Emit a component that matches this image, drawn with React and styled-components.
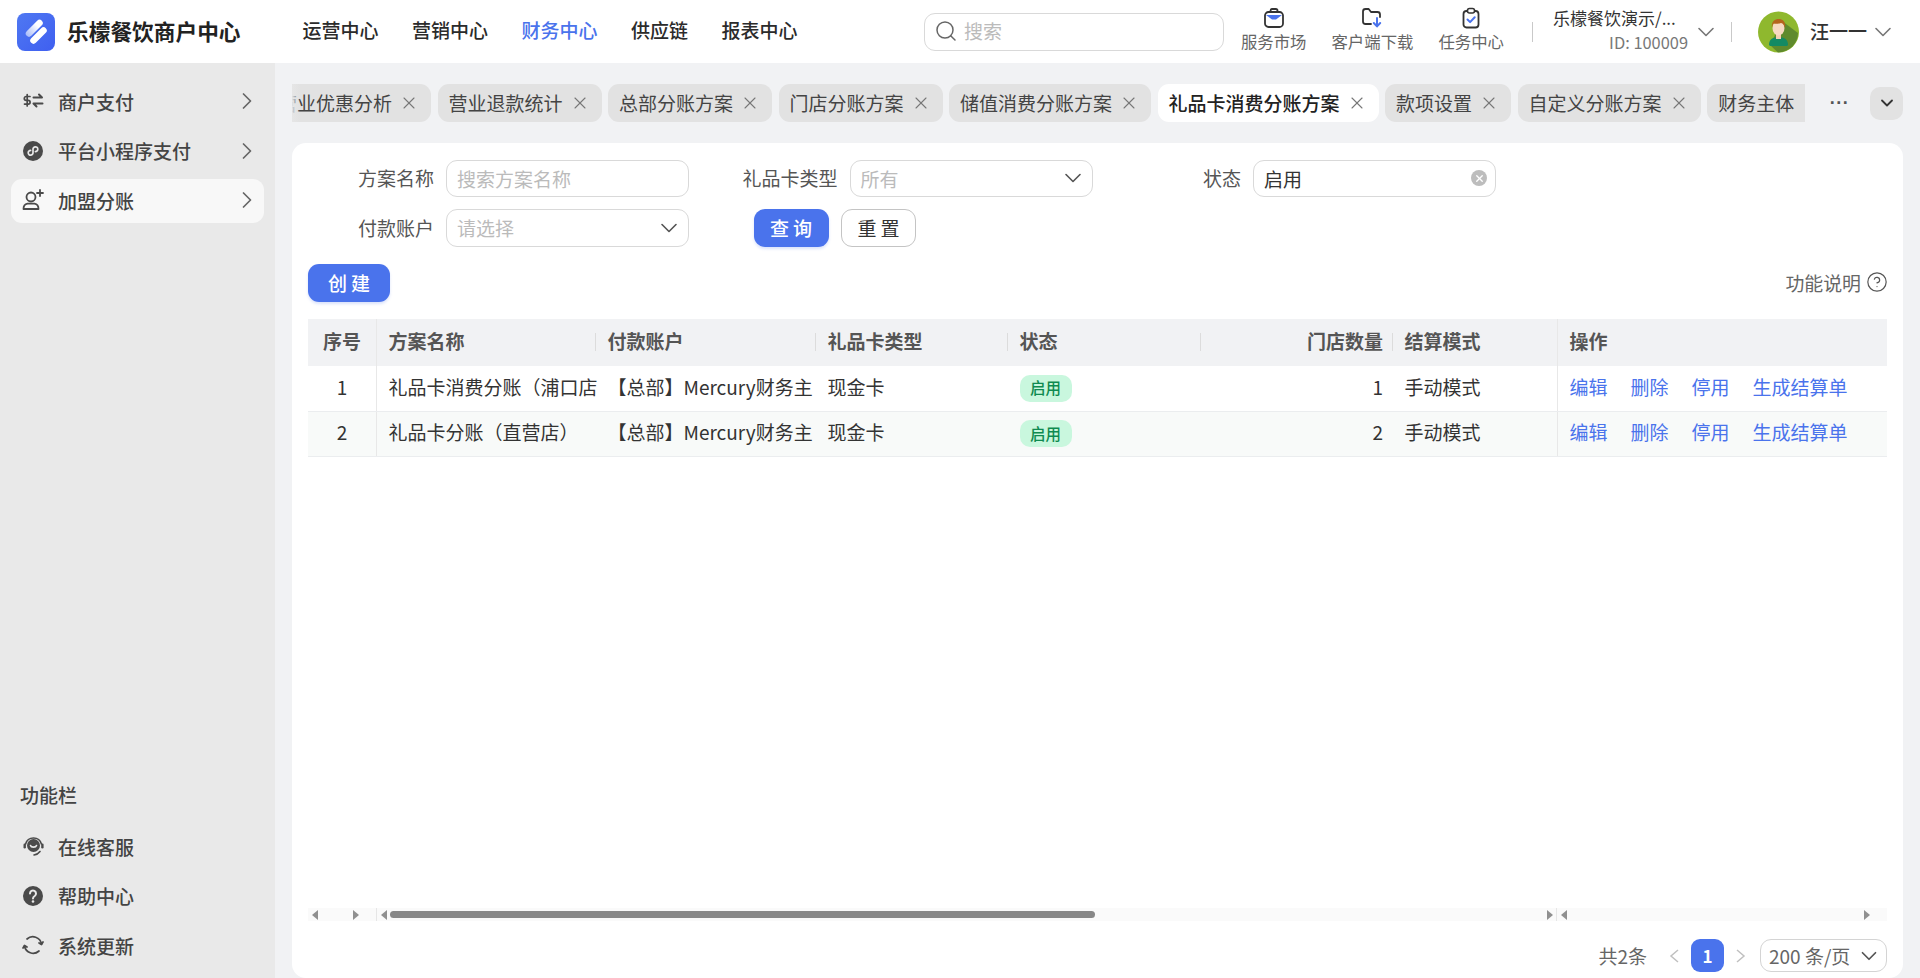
import React from 'react'
import styled, { createGlobalStyle } from 'styled-components'
import { Search, ChevronRight, ChevronDown, X, CircleHelp } from 'lucide-react'

const BLUE = '#4a73ec'

const GlobalStyle = createGlobalStyle`
  * { box-sizing: border-box; }
  html, body { margin: 0; height: 100%; overflow: hidden; }
  body {
    font-family: "Noto Sans CJK SC", "Noto Sans", sans-serif;
    font-size: 19px;
    color: #333;
    background: #f1f2f4;
  }
`

const Page = styled.div`
  width: 1920px;
  height: 978px;
  display: flex;
  flex-direction: column;
`
const Topbar = styled.header`
  height: 63px;
  flex: none;
  background: #fff;
  display: flex;
  align-items: center;
  padding: 0 30px 0 17px;
`
const Brand = styled.div`
  display: flex;
  align-items: center;
  gap: 12px;
  font-size: 21.7px;
  font-weight: 700;
  color: #222;
`
const BrandName = styled.span`
  padding-bottom: 3px;
`
const Nav = styled.nav`
  display: flex;
  gap: 33.5px;
  margin-left: 62px;
  padding-bottom: 4px;
`
const NavItem = styled.span`
  font-size: 19px;
  font-weight: 500;
  color: ${p => (p.$active ? BLUE : '#2b2b2b')};
`
const SearchBox = styled.div`
  width: 300px;
  height: 38px;
  margin-left: auto;
  display: flex;
  align-items: center;
  gap: 6px;
  padding: 0 0 2px 9px;
  border: 1px solid #d9d9d9;
  border-radius: 11px;
  color: #bbb;
  svg { color: #666; }
`
const Tools = styled.div`
  display: flex;
  gap: 25px;
  margin-left: 17px;
  padding-bottom: 5px;
`
const Tool = styled.div`
  display: flex;
  flex-direction: column;
  align-items: center;
  font-size: 16.4px;
  line-height: 22px;
  color: #666;
  svg { margin-bottom: 1px; }
`
const VLine = styled.span`
  width: 1px;
  height: 20px;
  background: #c9c9c9;
  margin: ${p => p.$margin};
`
const Company = styled.div`
  width: 135px;
  display: flex;
  flex-direction: column;
  align-items: flex-end;
  padding-bottom: 3px;
`
const CompanyName = styled.span`
  align-self: flex-start;
  font-size: 17px;
  line-height: 25px;
  color: #333;
  white-space: nowrap;
`
const CompanyId = styled.span`
  font-size: 16.4px;
  line-height: 25px;
  color: #777;
`
const CaretIcon = styled(ChevronDown)`
  color: #777;
  flex: none;
  margin: 0 -7px 0 ${p => p.$gap - 7}px;
`
const UserName = styled.span`
  margin-left: 11px;
  padding-bottom: 3px;
  font-size: 19px;
  font-weight: 500;
  color: #333;
  white-space: nowrap;
`

const Body = styled.div`
  flex: 1;
  min-height: 0;
  display: flex;
`
const Sidebar = styled.aside`
  width: 275px;
  flex: none;
  background: #e9e9e9;
  display: flex;
  flex-direction: column;
  justify-content: space-between;
  padding: 17px 11px 10px;
`
const MenuList = styled.div`
  display: flex;
  flex-direction: column;
  gap: 5.5px;
`
const MenuItem = styled.div`
  height: 44px;
  display: flex;
  align-items: center;
  padding: 0 3px 2px 11px;
  border-radius: 11px;
  background: ${p => (p.$active ? '#f8f8f8' : 'transparent')};
  font-weight: 500;
  color: #444;
  svg.lead { flex: none; margin-right: 14px; color: #4a4a4a; }
  svg.more { flex: none; margin-left: auto; color: #666; }
`
const SectionTitle = styled.div`
  font-weight: 500;
  color: #444;
  line-height: 26px;
  padding-left: 9px;
  margin-bottom: 17px;
  margin-top: -1px;
`

const Workspace = styled.main`
  flex: 1;
  min-width: 0;
  display: flex;
  flex-direction: column;
  padding: 21px 17px 0;
`
const TabRow = styled.div`
  height: 38px;
  flex: none;
  display: flex;
  align-items: center;
`
const TabStrip = styled.div`
  position: relative;
  width: 1514px;
  height: 38px;
  overflow: hidden;
  &::before {
    content: '';
    position: absolute;
    left: 0;
    top: 0;
    bottom: 0;
    width: 8px;
    background: linear-gradient(90deg, #e6e6e6, rgba(230, 230, 230, 0));
  }
`
const TabTrack = styled.div`
  display: flex;
  gap: 6.5px;
  margin-left: -25px;
  width: max-content;
`
const Tab = styled.div`
  height: 38px;
  display: flex;
  align-items: center;
  padding: 0 12px 1px 11px;
  border-radius: 11px;
  white-space: nowrap;
  background: ${p => (p.$active ? '#fff' : '#e2e2e2')};
  color: ${p => (p.$active ? '#222' : '#444')};
  font-weight: ${p => (p.$active ? 500 : 400)};
  svg { margin-left: 7px; color: #777; }
`
const TabMore = styled.span`
  width: 65px;
  padding-left: 4px;
  text-align: center;
  color: #555;
  font-family: "Liberation Sans", sans-serif;
  font-size: 18px;
  font-weight: 700;
  line-height: 30px;
  letter-spacing: 0.5px;
`
const TabToggle = styled.div`
  width: 33px;
  height: 33px;
  border-radius: 10px;
  background: #e2e2e2;
  display: flex;
  align-items: center;
  justify-content: center;
  color: #333;
`

const Card = styled.section`
  flex: 1;
  min-height: 0;
  margin-top: 21px;
  background: #fff;
  border-radius: 14px;
  display: flex;
  flex-direction: column;
  padding: 17px 16px 6px;
`
const FilterGrid = styled.div`
  display: grid;
  grid-template-columns: repeat(3, 381px);
  column-gap: 22.5px;
  row-gap: 12px;
`
const Field = styled.div`
  display: grid;
  grid-template-columns: 1fr 243px;
  column-gap: 12px;
  align-items: center;
`
const FieldLabel = styled.label`
  text-align: right;
  color: #555;
  padding-bottom: 2px;
`
const InputBox = styled.div`
  height: ${p => (p.$tall ? 38 : 37)}px;
  display: flex;
  align-items: center;
  justify-content: space-between;
  padding: 0 8px 1px 10px;
  border: 1px solid #d9d9d9;
  border-radius: 11px;
  color: ${p => (p.$filled ? '#333' : '#bbb')};
  svg.caret { flex: none; margin-right: -3px; color: #555; }
`
const ClearDot = styled.span`
  width: 16px;
  height: 16px;
  border-radius: 50%;
  background: #bdbdbd;
  color: #fff;
  display: flex;
  align-items: center;
  justify-content: center;
`
const ButtonGroup = styled.div`
  display: flex;
  gap: 12.5px;
  padding-left: 42px;
`
const Button = styled.button`
  height: 38px;
  width: ${p => p.$width}px;
  border-radius: 11px;
  font: inherit;
  font-weight: ${p => (p.$primary ? 500 : 400)};
  letter-spacing: 4px;
  padding: 0 0 2px 4px;
  border: ${p => (p.$primary ? 'none' : '1px solid #c4c4c4')};
  background: ${p => (p.$primary ? BLUE : '#fff')};
  color: ${p => (p.$primary ? '#fff' : '#333')};
  box-shadow: ${p => (p.$primary ? '0 2px 3px rgba(74, 115, 236, 0.2)' : 'none')};
`
const Toolbar = styled.div`
  margin-top: 17px;
  display: flex;
  align-items: center;
  justify-content: space-between;
`
const HelpLink = styled.span`
  display: flex;
  align-items: center;
  gap: 5px;
  color: #666;
  font-size: 18.9px;
  padding-bottom: 2px;
  margin-right: -1px;
  svg { color: #555; }
`
const TableWrap = styled.div`
  flex: 1;
  min-height: 0;
  margin-top: 17px;
`
const COLUMNS = '69px 219px 220px 192px 193px 192px 164px 330px'
const HeadRow = styled.div`
  display: grid;
  grid-template-columns: ${COLUMNS};
  height: 47px;
  background: #f1f2f4;
  font-weight: 700;
  color: #555;
`
const Row = styled.div`
  display: grid;
  grid-template-columns: ${COLUMNS};
  height: 45.5px;
  border-bottom: 1.5px solid #ebedef;
  background: ${p => (p.$striped ? '#f8faf9' : '#fff')};
`
const Cell = styled.div`
  position: relative;
  display: flex;
  align-items: center;
  min-width: 0;
  white-space: nowrap;
  padding-left: ${p => (p.$align ? 0 : 11.5)}px;
  padding-right: ${p => (p.$align === 'right' ? 10 : 0)}px;
  padding-bottom: ${p => (p.$flush ? 0 : 4)}px;
  justify-content: ${p => (p.$align === 'right' ? 'flex-end' : p.$align === 'center' ? 'center' : 'flex-start')};
  ${p => p.$align === 'center' && 'border-right: 1px solid #e8e8e8;'}
  ${p => p.$fixed && 'border-left: 1px solid #e8e8e8;'}
`
const HeadCell = styled(Cell)`
  &::after {
    content: ${p => (p.$divider ? "''" : 'none')};
    position: absolute;
    right: 0;
    top: 14px;
    height: 18px;
    width: 1.5px;
    background: #dcdcdc;
  }
`
const Badge = styled.span`
  width: 52px;
  height: 27px;
  padding-bottom: 2px;
  border-radius: 10px;
  background: #c9f7de;
  color: #0f8a50;
  font-size: 15.5px;
  font-weight: 500;
  display: flex;
  align-items: center;
  justify-content: center;
`
const ActionGroup = styled.div`
  display: flex;
  gap: 23px;
  color: ${BLUE};
`
const ScrollStrip = styled.div`
  height: 13px;
  flex: none;
  display: grid;
  grid-template-columns: 69px 1180px 330px;
  background: #fafafa;
`
const ScrollPart = styled.div`
  display: flex;
  align-items: center;
  padding: 0 ${p => (p.$tail ? 17 : 3)}px 0 4px;
  border-right: ${p => (p.$divider ? '1px solid #e6e6e6' : 'none')};
`
const ScrollArrow = styled.span`
  flex: none;
  width: 0;
  height: 0;
  border-top: 5px solid transparent;
  border-bottom: 5px solid transparent;
  ${p => (p.$dir === 'left' ? 'border-right: 6px solid #909090;' : 'border-left: 6px solid #909090; margin-left: auto;')}
`
const ScrollThumb = styled.span`
  width: 705px;
  height: 7px;
  margin-left: 3px;
  border-radius: 4px;
  background: #888;
`
const Pager = styled.footer`
  flex: none;
  margin-top: 18px;
  display: flex;
  align-items: center;
  justify-content: flex-end;
  height: 33px;
`
const PagerTotal = styled.span`
  color: #666;
  margin-right: 22px;
`
const PagerArrow = styled.svg`
  width: 10px;
  height: 14px;
  flex: none;
  fill: none;
  stroke: #c0c0c0;
  stroke-width: 1.5;
`
const PageNumber = styled.span`
  width: 33px;
  height: 33px;
  margin: 0 12px;
  border-radius: 9px;
  background: ${BLUE};
  color: #fff;
  font-size: 17px;
  font-weight: 700;
  display: flex;
  align-items: center;
  justify-content: center;
`
const PageSize = styled.div`
  width: 127px;
  height: 33px;
  margin-left: 14px;
  border: 1px solid #d4d4d4;
  border-radius: 11px;
  display: flex;
  align-items: center;
  justify-content: space-between;
  padding: 0 4px 0 8px;
  color: #666;
  white-space: nowrap;
  svg { flex: none; color: #555; }
`

const Logo = () => (
  <svg width="38" height="38" viewBox="0 0 38 38" fill="none">
    <defs>
      <linearGradient id="logoBg" x1="0" y1="0" x2="1" y2="1">
        <stop offset="0" stopColor="#4f78f2" />
        <stop offset="1" stopColor="#3f5ff0" />
      </linearGradient>
      <linearGradient id="band" gradientUnits="userSpaceOnUse" x1="9" y1="22" x2="20" y2="12">
        <stop offset="0" stopColor="#a9bcf9" />
        <stop offset="1" stopColor="#ffffff" />
      </linearGradient>
    </defs>
    <rect width="38" height="38" rx="8" fill="url(#logoBg)" />
    <path d="M22.500 10L12 20.500" stroke="url(#band)" strokeWidth="6.500" strokeLinecap="round" />
    <path d="M26.500 17.500L16.500 27.500" stroke="#fff" strokeWidth="6.500" strokeLinecap="round" />
  </svg>
)
const BagIcon = () => (
  <svg width="22" height="22" viewBox="0 0 22 22" fill="none">
    <path d="M7.500 5V3.800C7.500 2.800 8.200 2 9.200 2h3.600c1 0 1.700.8 1.700 1.800V5" stroke="#333" strokeWidth="1.800" />
    <rect x="2" y="5" width="18" height="15" rx="3.500" stroke="#333" strokeWidth="1.800" />
    <path d="M3 8h16l-6 4.500h-4z" fill={BLUE} />
  </svg>
)
const FolderIcon = () => (
  <svg width="22" height="22" viewBox="0 0 22 22" fill="none">
    <path d="M10 17H4.500A2.500 2.500 0 0 1 2 14.500v-10A2.500 2.500 0 0 1 4.500 2h3.200l2.300 3h6.500A2.500 2.500 0 0 1 19 7.500V10" stroke="#333" strokeWidth="1.800" strokeLinecap="round" strokeLinejoin="round" />
    <path d="M16 11v8M12.800 16l3.200 3.400 3.200-3.400" stroke={BLUE} strokeWidth="2" strokeLinecap="round" strokeLinejoin="round" />
  </svg>
)
const ClipIcon = () => (
  <svg width="22" height="22" viewBox="0 0 22 22" fill="none">
    <rect x="3.500" y="4" width="15" height="16.500" rx="3" stroke="#333" strokeWidth="1.800" />
    <rect x="7.500" y="1.500" width="7" height="4.500" rx="2" fill="#fff" stroke="#333" strokeWidth="1.600" />
    <path d="M7.500 12.500l2.600 2.600 4.600-4.800" stroke={BLUE} strokeWidth="2" strokeLinecap="round" strokeLinejoin="round" />
  </svg>
)
const Avatar = () => (
  <svg width="41" height="42" viewBox="0 0 41 42">
    <circle cx="20.500" cy="21" r="20.500" fill="#8fb82e" />
    <path d="M24 10 L40 22 C40 33 31 41 20 41.500 L12 34 Z" fill="#5f8a2d" />
    <path d="M11 34c0-5 3-7 6-7.500h7c3 .5 6 2.500 6 7.500l-1 1H12z" fill="#138a63" />
    <rect x="18" y="22" width="5" height="6" fill="#f3cfb3" />
    <ellipse cx="20.500" cy="17" rx="6" ry="7.500" fill="#f7d9c2" />
    <path d="M14 17c-1-6 2.500-9 6.500-9 5 0 7.500 3.500 6.500 9-1-3-2-4.500-4-5-3 1-6 1-7.500.5-.8 1-1.200 2.500-1.500 4.500z" fill="#b5651d" />
  </svg>
)
const TransferIcon = () => (
  <svg className="lead" width="22" height="22" viewBox="0 0 22 22" fill="none" stroke="currentColor" strokeWidth="2" strokeLinecap="round" strokeLinejoin="round">
    <path d="M8 6.500H4.200a1.700 1.700 0 0 0 0 3.800h2a1.700 1.700 0 0 1 0 3.800H2.500M5.200 4.500v11.500" strokeWidth="1.700" />
    <path d="M11.500 7.500h8.500l-3-3M20.500 13.500h-9l3 3" />
  </svg>
)
const MiniAppIcon = () => (
  <svg className="lead" width="22" height="22" viewBox="0 0 22 22">
    <circle cx="11" cy="11" r="10" fill="currentColor" />
    <path d="M8.600 10.400a2.400 2.400 0 1 0 2.400 2.300V9.300a2.400 2.400 0 1 1 2.400 2.300" fill="none" stroke="#e9e9e9" strokeWidth="1.700" strokeLinecap="round" />
  </svg>
)
const UserAddIcon = () => (
  <svg className="lead" width="22" height="22" viewBox="0 0 22 22" fill="none" stroke="currentColor" strokeWidth="1.800" strokeLinecap="round">
    <circle cx="9" cy="8" r="4.500" />
    <path d="M1.500 20c0-3.500 2-5 4-5.300h7c2 .3 4 1.800 4 5.300z" strokeLinejoin="round" />
    <path d="M18 1v6M15 4h6" />
  </svg>
)
const ServiceIcon = () => (
  <svg className="lead" width="22" height="22" viewBox="0 0 22 22" fill="none" stroke="currentColor" strokeLinecap="round">
    <circle cx="11.500" cy="10.500" r="6.500" fill="currentColor" stroke="none" />
    <path d="M8.500 10.500c.6 2.200 5.400 2.200 6 0" stroke="#e9e9e9" strokeWidth="1.600" />
    <path d="M3.600 9A8.200 8.200 0 0 1 19.400 9M18 16.500A9 9 0 0 1 12 20" strokeWidth="1.600" />
    <rect x="1.500" y="8.500" width="2.400" height="5" rx="1.200" fill="currentColor" stroke="none" />
    <rect x="19.200" y="8.500" width="2.400" height="5" rx="1.200" fill="currentColor" stroke="none" />
  </svg>
)
const HelpIcon = () => (
  <svg className="lead" width="22" height="22" viewBox="0 0 22 22">
    <circle cx="11" cy="11" r="10" fill="currentColor" />
    <path d="M8 8.500a3 3 0 1 1 4.700 2.500c-1.100.700-1.700 1.200-1.700 2.500" fill="none" stroke="#e9e9e9" strokeWidth="2" strokeLinecap="round" />
    <circle cx="11" cy="16.500" r="1.300" fill="#e9e9e9" />
  </svg>
)
const SyncIcon = () => (
  <svg className="lead" width="22" height="22" viewBox="0 0 22 22" fill="none" stroke="currentColor" strokeWidth="1.700" strokeLinecap="round" strokeLinejoin="round">
    <path d="M5 5a8.800 8.800 0 0 1 14.500 5M2.500 12a8.800 8.800 0 0 0 14.500 5" />
    <path d="M21 8l-1.500 2.500L17 9M1 14l1.500-2.500L5 13" fill="currentColor" />
  </svg>
)

const tabs = ['营业优惠分析', '营业退款统计', '总部分账方案', '门店分账方案', '储值消费分账方案', '礼品卡消费分账方案', '款项设置', '自定义分账方案', '财务主体']
const navItems = ['运营中心', '营销中心', '财务中心', '供应链', '报表中心']
const rows = [
  { no: 1, name: '礼品卡消费分账（浦口店', count: 1 },
  { no: 2, name: '礼品卡分账（直营店）', count: 2 },
]

const MenuArrow = () => <ChevronRight className="more" size={28} strokeWidth={1.5} />

const App = () => (
  <Page>
    <GlobalStyle />
    <Topbar>
      <Brand>
        <Logo />
        <BrandName>乐檬餐饮商户中心</BrandName>
      </Brand>
      <Nav>
        {navItems.map(item => (
          <NavItem key={item} $active={item === '财务中心'}>{item}</NavItem>
        ))}
      </Nav>
      <SearchBox>
        <Search size={24} strokeWidth={1.5} />
        搜索
      </SearchBox>
      <Tools>
        <Tool><BagIcon />服务市场</Tool>
        <Tool><FolderIcon />客户端下载</Tool>
        <Tool><ClipIcon />任务中心</Tool>
      </Tools>
      <VLine $margin="0 20px 0 28px" />
      <Company>
        <CompanyName>乐檬餐饮演示/...</CompanyName>
        <CompanyId>ID: 100009</CompanyId>
      </Company>
      <CaretIcon size={28} strokeWidth={1.4} $gap={11} />
      <VLine $margin="0 26px 0 18px" />
      <Avatar />
      <UserName>汪一一</UserName>
      <CaretIcon size={28} strokeWidth={1.4} $gap={9} />
    </Topbar>
    <Body>
      <Sidebar>
        <MenuList>
          <MenuItem><TransferIcon />商户支付<MenuArrow /></MenuItem>
          <MenuItem><MiniAppIcon />平台小程序支付<MenuArrow /></MenuItem>
          <MenuItem $active><UserAddIcon />加盟分账<MenuArrow /></MenuItem>
        </MenuList>
        <div>
          <SectionTitle>功能栏</SectionTitle>
          <MenuList>
            <MenuItem><ServiceIcon />在线客服</MenuItem>
            <MenuItem><HelpIcon />帮助中心</MenuItem>
            <MenuItem><SyncIcon />系统更新</MenuItem>
          </MenuList>
        </div>
      </Sidebar>
      <Workspace>
        <TabRow>
          <TabStrip>
            <TabTrack>
              {tabs.map(tab => (
                <Tab key={tab} $active={tab === '礼品卡消费分账方案'}>
                  {tab}
                  <X size={20} strokeWidth={1.3} />
                </Tab>
              ))}
            </TabTrack>
          </TabStrip>
          <TabMore>···</TabMore>
          <TabToggle><ChevronDown size={20} strokeWidth={2.2} /></TabToggle>
        </TabRow>
        <Card>
          <FilterGrid>
            <Field>
              <FieldLabel>方案名称</FieldLabel>
              <InputBox>搜索方案名称</InputBox>
            </Field>
            <Field>
              <FieldLabel>礼品卡类型</FieldLabel>
              <InputBox>所有<ChevronDown className="caret" size={28} strokeWidth={1.4} /></InputBox>
            </Field>
            <Field>
              <FieldLabel>状态</FieldLabel>
              <InputBox $filled>启用<ClearDot><X size={11} strokeWidth={3} /></ClearDot></InputBox>
            </Field>
            <Field>
              <FieldLabel>付款账户</FieldLabel>
              <InputBox $tall>请选择<ChevronDown className="caret" size={28} strokeWidth={1.4} /></InputBox>
            </Field>
            <ButtonGroup>
              <Button $primary $width={75}>查询</Button>
              <Button $width={75}>重置</Button>
            </ButtonGroup>
          </FilterGrid>
          <Toolbar>
            <Button $primary $width={82}>创建</Button>
            <HelpLink>功能说明<CircleHelp size={22} strokeWidth={1.3} /></HelpLink>
          </Toolbar>
          <TableWrap>
            <HeadRow>
              <HeadCell $align="center">序号</HeadCell>
              <HeadCell $divider>方案名称</HeadCell>
              <HeadCell $divider>付款账户</HeadCell>
              <HeadCell $divider>礼品卡类型</HeadCell>
              <HeadCell $divider>状态</HeadCell>
              <HeadCell $align="right" $divider>门店数量</HeadCell>
              <HeadCell>结算模式</HeadCell>
              <HeadCell $fixed>操作</HeadCell>
            </HeadRow>
            {rows.map(row => (
              <Row key={row.no} $striped={row.no === 2}>
                <Cell $align="center">{row.no}</Cell>
                <Cell>{row.name}</Cell>
                <Cell>【总部】Mercury财务主</Cell>
                <Cell>现金卡</Cell>
                <Cell $flush><Badge>启用</Badge></Cell>
                <Cell $align="right">{row.count}</Cell>
                <Cell>手动模式</Cell>
                <Cell $fixed>
                  <ActionGroup>
                    <span>编辑</span>
                    <span>删除</span>
                    <span>停用</span>
                    <span>生成结算单</span>
                  </ActionGroup>
                </Cell>
              </Row>
            ))}
          </TableWrap>
          <ScrollStrip>
            <ScrollPart $divider $tail><ScrollArrow $dir="left" /><ScrollArrow $dir="right" /></ScrollPart>
            <ScrollPart $divider><ScrollArrow $dir="left" /><ScrollThumb /><ScrollArrow $dir="right" /></ScrollPart>
            <ScrollPart $tail><ScrollArrow $dir="left" /><ScrollArrow $dir="right" /></ScrollPart>
          </ScrollStrip>
          <Pager>
            <PagerTotal>共2条</PagerTotal>
            <PagerArrow viewBox="0 0 10 14"><path d="M9 1L2 7l7 6" /></PagerArrow>
            <PageNumber>1</PageNumber>
            <PagerArrow viewBox="0 0 10 14"><path d="M1 1l7 6-7 6" /></PagerArrow>
            <PageSize>200 条/页<ChevronDown size={26} strokeWidth={1.6} /></PageSize>
          </Pager>
        </Card>
      </Workspace>
    </Body>
  </Page>
)

export default App
